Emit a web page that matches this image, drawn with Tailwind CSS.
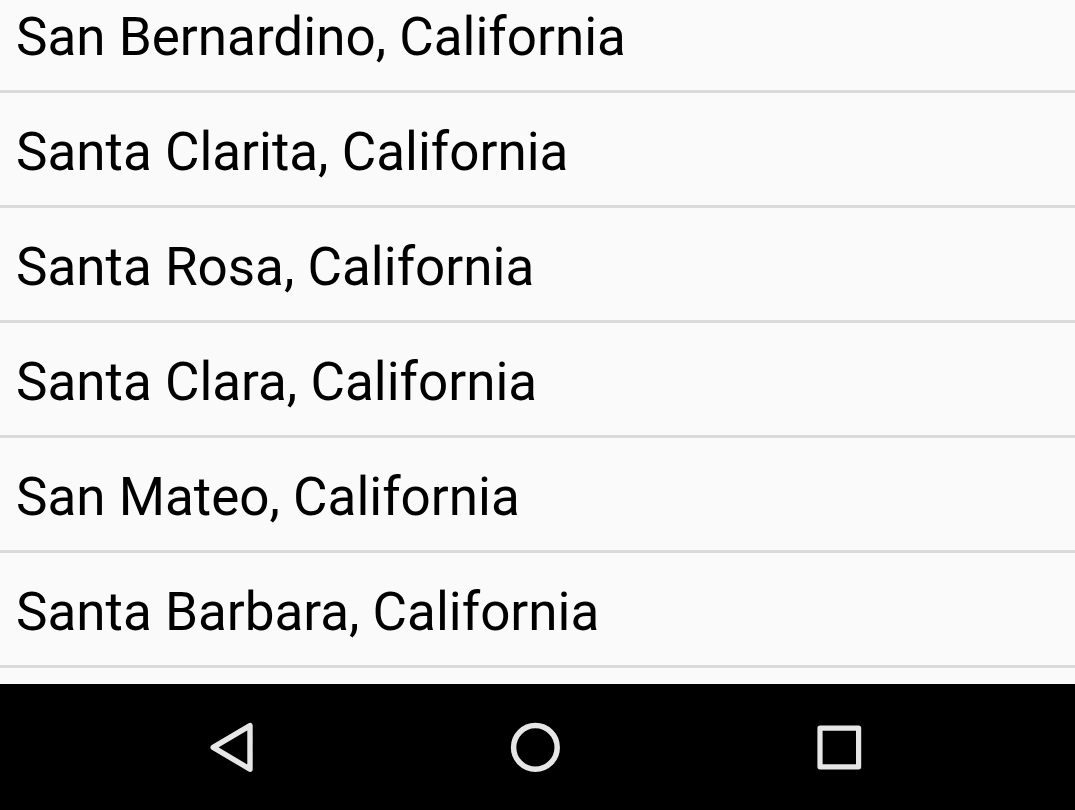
<!DOCTYPE html>
<html lang="en">
<head>
<meta charset="utf-8">
<meta name="viewport" content="width=device-width, initial-scale=1">
<title>Cities</title>
<script src="https://cdn.jsdelivr.net/npm/@tailwindcss/browser@4"></script>
</head>
<body class="h-screen flex flex-col overflow-hidden bg-[#fafafa] font-['Roboto',sans-serif] text-black">
<main class="flex-1 min-h-0 overflow-hidden flex flex-col">
<ul class="text-[53px] leading-[60px]">
<li class="px-4 pt-[7px] pb-[23px] border-b-3 border-[#dadada]">San Bernardino, California</li>
<li class="px-4 pt-[29px] pb-[23px] border-b-3 border-[#dadada]">Santa Clarita, California</li>
<li class="px-4 pt-[29px] pb-[23px] border-b-3 border-[#dadada]">Santa Rosa, California</li>
<li class="px-4 pt-[29px] pb-[23px] border-b-3 border-[#dadada]">Santa Clara, California</li>
<li class="px-4 pt-[29px] pb-[23px] border-b-3 border-[#dadada]">San Mateo, California</li>
<li class="px-4 pt-[29px] pb-[23px] border-b-3 border-[#dadada]">Santa Barbara, California</li>
</ul>
</main>
<nav aria-label="System navigation" class="h-[126px] shrink-0 bg-black text-[#e6e6e6] flex items-center justify-center gap-[240px] pr-[5px]">
<button aria-label="Back" class="size-16"><svg viewBox="0 0 64 64" fill="none" stroke="currentColor" stroke-width="5.4" stroke-linejoin="round"><path d="M51 10.6V54.2L14.2 32.4Z"/></svg></button>
<button aria-label="Home" class="size-16"><svg viewBox="0 0 64 64" fill="none" stroke="currentColor" stroke-width="5.5"><circle cx="32.4" cy="32.4" r="21.8"/></svg></button>
<button aria-label="Overview" class="size-16"><svg viewBox="0 0 64 64" fill="none" stroke="currentColor" stroke-width="5.2" stroke-linejoin="round"><rect x="13" y="13.2" width="38.6" height="38.6"/></svg></button>
</nav>
</body>
</html>
